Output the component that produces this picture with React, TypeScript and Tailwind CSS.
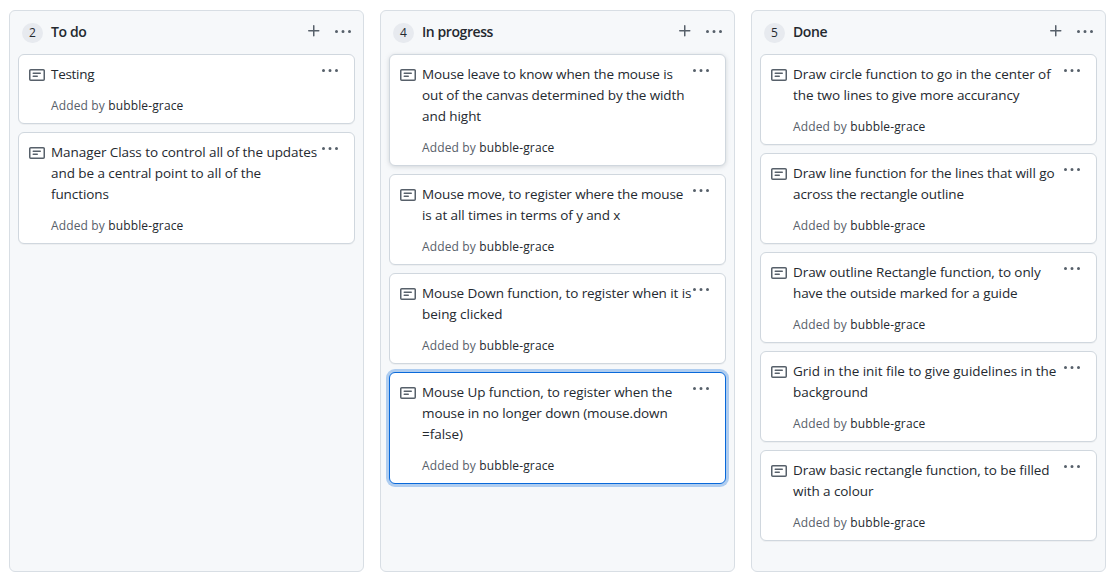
type Line = { text: string; tracking: string };
type CardData = { lines: Line[]; state?: "raised" | "focused" };
type ColumnData = { title: string; tracking: string; cards: CardData[] };

const columns: ColumnData[] = [
  {
    title: "To do",
    tracking: "tracking-[-0.4px]",
    cards: [
      { lines: [{ text: "Testing", tracking: "tracking-[-0.3px]" }] },
      {
        lines: [
          { text: "Manager Class to control all of the updates", tracking: "tracking-[-0.07px]" },
          { text: "and be a central point to all of the", tracking: "tracking-[-0.065px]" },
          { text: "functions", tracking: "tracking-[-0.1px]" },
        ],
      },
    ],
  },
  {
    title: "In progress",
    tracking: "tracking-[-0.42px]",
    cards: [
      {
        state: "raised",
        lines: [
          { text: "Mouse leave to know when the mouse is", tracking: "tracking-[-0.11px]" },
          { text: "out of the canvas determined by the width", tracking: "tracking-[-0.105px]" },
          { text: "and hight", tracking: "tracking-[-0.06px]" },
        ],
      },
      {
        lines: [
          { text: "Mouse move, to register where the mouse", tracking: "tracking-[-0.125px]" },
          { text: "is at all times in terms of y and x", tracking: "tracking-[-0.1px]" },
        ],
      },
      {
        lines: [
          { text: "Mouse Down function, to register when it is", tracking: "tracking-[-0.09px]" },
          { text: "being clicked", tracking: "tracking-[-0.04px]" },
        ],
      },
      {
        state: "focused",
        lines: [
          { text: "Mouse Up function, to register when the", tracking: "tracking-[-0.09px]" },
          { text: "mouse in no longer down (mouse.down", tracking: "tracking-[-0.11px]" },
          { text: "=false)", tracking: "tracking-[-0.02px]" },
        ],
      },
    ],
  },
  {
    title: "Done",
    tracking: "tracking-[-0.4px]",
    cards: [
      {
        lines: [
          { text: "Draw circle function to go in the center of", tracking: "tracking-[-0.055px]" },
          { text: "the two lines to give more accurancy", tracking: "tracking-[-0.075px]" },
        ],
      },
      {
        lines: [
          { text: "Draw line function for the lines that will go", tracking: "tracking-[-0.095px]" },
          { text: "across the rectangle outline", tracking: "tracking-[-0.11px]" },
        ],
      },
      {
        lines: [
          { text: "Draw outline Rectangle function, to only", tracking: "tracking-[-0.09px]" },
          { text: "have the outside marked for a guide", tracking: "tracking-[-0.09px]" },
        ],
      },
      {
        lines: [
          { text: "Grid in the init file to give guidelines in the", tracking: "tracking-[-0.015px]" },
          { text: "background", tracking: "tracking-[-0.01px]" },
        ],
      },
      {
        lines: [
          { text: "Draw basic rectangle function, to be filled", tracking: "tracking-[-0.08px]" },
          { text: "with a colour", tracking: "tracking-[-0.08px]" },
        ],
      },
    ],
  },
];

function NoteIcon() {
  return (
    <svg className="block size-4 shrink-0 fill-[#57606a]" viewBox="0 0 16 16" aria-hidden="true">
      <path
        fillRule="evenodd"
        d="M0 3.75C0 2.784.784 2 1.75 2h12.5c.966 0 1.75.784 1.75 1.75v8.5A1.75 1.75 0 0 1 14.25 14H1.75A1.75 1.75 0 0 1 0 12.25v-8.5zm1.75-.25a.25.25 0 0 0-.25.25v8.5c0 .138.112.25.25.25h12.5a.25.25 0 0 0 .25-.25v-8.5a.25.25 0 0 0-.25-.25H1.75zM3.5 6.25a.75.75 0 0 1 .75-.75h7a.75.75 0 0 1 0 1.5h-7a.75.75 0 0 1-.75-.75zm.75 2.25a.75.75 0 0 0 0 1.5h4a.75.75 0 0 0 0-1.5h-4z"
      />
    </svg>
  );
}

function DotsIcon() {
  return (
    <svg className="block size-4 shrink-0 fill-[#57606a]" viewBox="0 0 16 16" aria-hidden="true">
      <path d="M8 9a1.5 1.5 0 1 0 0-3 1.5 1.5 0 0 0 0 3zM1.5 9a1.5 1.5 0 1 0 0-3 1.5 1.5 0 0 0 0 3zm13 0a1.5 1.5 0 1 0 0-3 1.5 1.5 0 0 0 0 3z" />
    </svg>
  );
}

function PlusIcon() {
  return (
    <svg className="block size-4 shrink-0 fill-[#57606a]" viewBox="0 0 16 16" aria-hidden="true">
      <path d="M7.75 2a.75.75 0 0 1 .75.75V7h4.25a.75.75 0 0 1 0 1.5H8.5v4.25a.75.75 0 0 1-1.5 0V8.5H2.75a.75.75 0 0 1 0-1.5H7V2.75A.75.75 0 0 1 7.75 2z" />
    </svg>
  );
}

const cardStyles = {
  plain: "border-[#d0d7de] shadow-[0_1px_0_rgba(27,31,36,0.04)]",
  raised: "border-[#d0d7de] shadow-[0_1px_4px_rgba(140,149,159,0.35)]",
  focused: "border-[#0969da] shadow-[0_0_0_3px_rgba(9,105,218,0.3)]",
};

function Card({ lines, state }: CardData) {
  return (
    <article
      className={`flex rounded-md border bg-white pt-2 pr-4 pb-[7px] pl-2.5 ${cardStyles[state ?? "plain"]}`}
    >
      <div className="pt-1">
        <NoteIcon />
      </div>
      <div className="ml-1.5 min-w-0 flex-1 pt-px">
        {lines.map((line) => (
          <p
            key={line.text}
            className={`h-[21px] whitespace-nowrap text-[13.5px] leading-[21px] ${line.tracking}`}
          >
            {line.text}
          </p>
        ))}
        <p className="mt-[11px] h-5 whitespace-nowrap text-[12px] leading-5 tracking-[0.14px] text-[#57606a]">
          Added by <span className="text-[#24292f]">bubble-grace</span>
        </p>
      </div>
      <button type="button" className="h-4 w-4" aria-label="Card menu">
        <DotsIcon />
      </button>
    </article>
  );
}

export default function App() {
  return (
    <main className="flex h-[581px] w-[1112px] gap-4 overflow-hidden bg-white pt-2.5 pb-[9px] pl-[9px] font-['Open_Sans','Noto_Sans',sans-serif] text-[#24292f]">
      {columns.map((column) => (
        <section
          key={column.title}
          className="flex w-[355px] shrink-0 flex-col rounded-md border border-[#d8dee4] bg-[#f6f8fa] px-2"
        >
          <header className="flex h-[43px] shrink-0 items-center pr-1 pl-1">
            <span className="flex h-5 w-[21px] items-center justify-center rounded-full bg-[#e7eaef] text-[12px] font-medium">
              {column.cards.length}
            </span>
            <h2 className={`mb-[3px] ml-2 flex-1 text-[14px] leading-[21px] font-semibold ${column.tracking}`}>
              {column.title}
            </h2>
            <button type="button" className="mr-[13px] mb-[3px]" aria-label="Add a note">
              <PlusIcon />
            </button>
            <button type="button" className="mb-px" aria-label="Column menu">
              <DotsIcon />
            </button>
          </header>
          <div className="flex flex-col gap-2">
            {column.cards.map((card) => (
              <Card key={card.lines[0].text} {...card} />
            ))}
          </div>
        </section>
      ))}
    </main>
  );
}
